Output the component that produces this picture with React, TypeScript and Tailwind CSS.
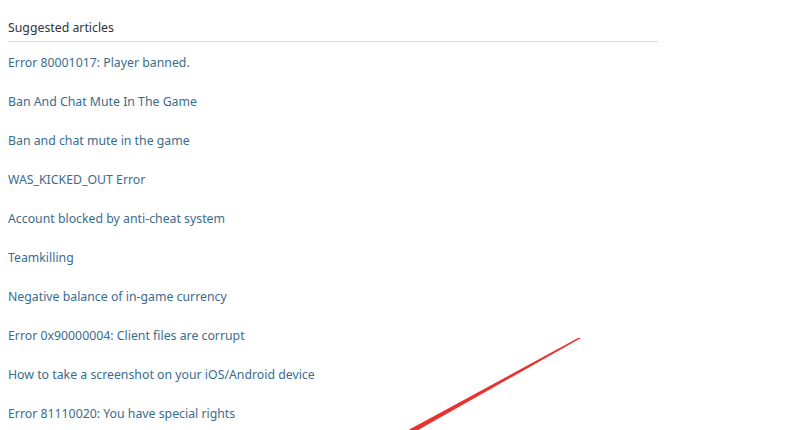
const articles = [
  'Error 80001017: Player banned.',
  'Ban And Chat Mute In The Game',
  'Ban and chat mute in the game',
  'WAS_KICKED_OUT Error',
  'Account blocked by anti-cheat system',
  'Teamkilling',
  'Negative balance of in-game currency',
  'Error 0x90000004: Client files are corrupt',
  'How to take a screenshot on your iOS/Android device',
  'Error 81110020: You have special rights',
];

export default function App() {
  return (
    <div className="relative w-[800px] h-[430px] overflow-hidden bg-white font-['Noto_Sans',sans-serif]">
      <div className="pl-2 w-[658px]">
        <div className="pt-[18px] pb-[3px] border-b border-[#d9d9d9] text-[12.3px] leading-5 text-[#333]">
          Suggested articles
        </div>
        <ul className="mt-[2px]">
          {articles.map((a) => (
            <li key={a} className="h-[39px] flex items-center text-[12.3px] text-[#3a6c8d]">
              <a href="#">{a}</a>
            </li>
          ))}
        </ul>
      </div>

      {/* red annotation stroke */}
      <svg className="absolute inset-0 pointer-events-none" width="800" height="430">
        <polygon points="401,434 411,434 581,338 578,338" fill="#e8322f" />
      </svg>
    </div>
  );
}
